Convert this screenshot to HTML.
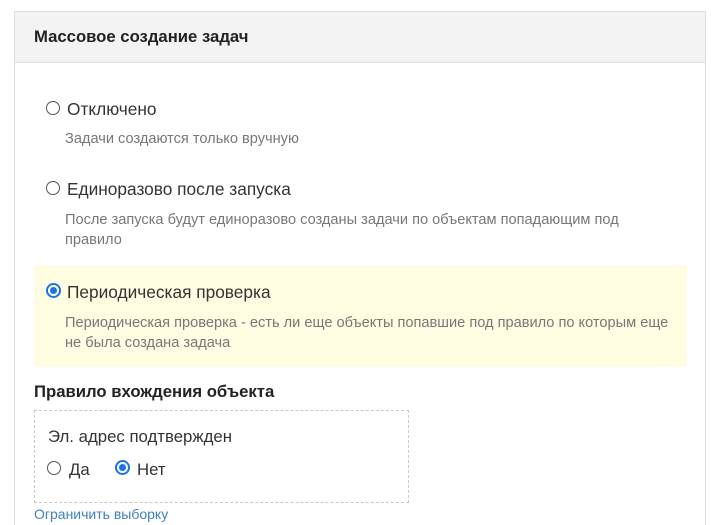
<!DOCTYPE html>
<html><head><meta charset="utf-8"><style>
html,body{margin:0;width:711px;height:525px;overflow:hidden}
body{background:#fff;font-family:"Liberation Sans",sans-serif;position:relative}
.panel{position:absolute;left:14px;top:11px;width:692px;height:520px;border:1px solid #e0e0e0;box-sizing:border-box}
.hdr{position:absolute;left:15px;top:12px;width:690px;height:50px;background:#f3f3f3;border-bottom:1px solid #e0e0e0}
.a{position:absolute;white-space:nowrap}
.h{font-weight:bold;font-size:16.7px;color:#222}
.lbl{font-size:17.3px;color:#333}
.d{font-size:14.6px;color:#777}
.r{position:absolute;width:14px;height:14px;border:1px solid #555;border-radius:50%;box-sizing:border-box}
.rc{position:absolute;width:15px;height:15px;border-radius:50%;background:#1a73e8;box-sizing:border-box}
.rc::after{content:"";position:absolute;left:4px;top:4px;width:7px;height:7px;border-radius:50%;background:#1a73e8;box-shadow:0 0 0 2px #fff}
.y{position:absolute;left:34px;top:265px;width:653px;height:102px;background:#fefde2}
.box{position:absolute;left:34px;top:410px;width:375px;height:93px;border:1px dashed #c8c8c8;box-sizing:border-box}
</style></head><body>
<div class="panel"></div>
<div class="hdr"></div>
<div class="a h" style="left:34px;top:27px">Массовое создание задач</div>
<div class="r" style="left:46px;top:101px"></div>
<div class="a lbl" style="left:67px;top:99px">Отключено</div>
<div class="a d" style="left:65px;top:131px">Задачи создаются только вручную</div>
<div class="r" style="left:46px;top:181px"></div>
<div class="a lbl" style="left:67px;top:179px">Единоразово после запуска</div>
<div class="a d" style="left:65px;top:212px">После запуска будут единоразово созданы задачи по объектам попадающим под</div>
<div class="a d" style="left:65px;top:232px">правило</div>
<div class="y"></div>
<div class="rc" style="left:46px;top:283px"></div>
<div class="a lbl" style="left:67px;top:282px">Периодическая проверка</div>
<div class="a d" style="left:65px;top:315px">Периодическая проверка - есть ли еще объекты попавшие под правило по которым еще</div>
<div class="a d" style="left:65px;top:335px">не была создана задача</div>
<div class="a h" style="left:34px;top:382px">Правило вхождения объекта</div>
<div class="box"></div>
<div class="a lbl" style="left:48px;top:427px;font-size:16.8px">Эл. адрес подтвержден</div>
<div class="r" style="left:47px;top:461px"></div>
<div class="a lbl" style="left:69px;top:460px;font-size:16.8px">Да</div>
<div class="rc" style="left:115px;top:460px"></div>
<div class="a lbl" style="left:137px;top:460px;font-size:16.8px">Нет</div>
<div class="a" style="left:34px;top:506px;font-size:14px;color:#3f7fbf">Ограничить выборку</div>
</body></html>
